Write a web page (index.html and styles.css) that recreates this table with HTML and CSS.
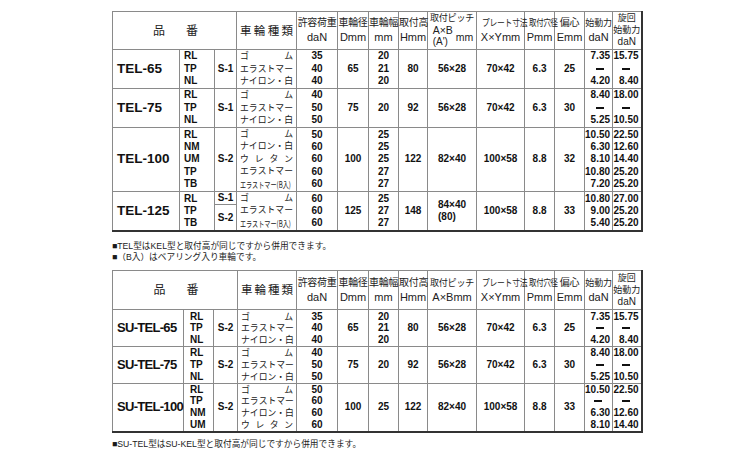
FILE: index.html
```html
<!DOCTYPE html>
<html lang="ja">
<head>
<meta charset="utf-8">
<title>TEL</title>
<link rel="stylesheet" href="styles.css">
</head>
<body>
<div class="page">

<table class="t t1">
<colgroup>
<col class="w-name"><col class="w-code"><col class="w-s"><col class="w-kind">
<col class="w-load"><col class="w-dia"><col class="w-wid"><col class="w-hgt"><col class="w-pit"><col class="w-plt"><col class="w-hole"><col class="w-ecc"><col class="w-st"><col class="w-rot">
</colgroup>
<tr class="hd">
<th colspan="3"><div class="hin"><span>品</span><span>番</span></div></th>
<th><div class="kh"><span>車</span><span>輪</span><span>種</span><span>類</span></div></th>
<th><div class="j">許容荷重</div><div class="u">daN</div></th>
<th><div class="j">車輪径</div><div class="u">Dmm</div></th>
<th><div class="j">車輪幅</div><div class="u">mm</div></th>
<th><div class="j">取付高</div><div class="u">Hmm</div></th>
<th><div class="j j9 jp">取付ピッチ</div><div class="pu"><div class="pl"><div>A×B</div><div class="pa">(A')</div></div><div class="pm">mm</div></div></th>
<th><div class="j"><span class="sq sq1">プレート寸法</span></div><div class="u">X×Ymm</div></th>
<th><div class="j"><span class="sq sq2">取付穴径</span></div><div class="u">Pmm</div></th>
<th><div class="j">偏心</div><div class="u">Emm</div></th>
<th><div class="j j9">始動力</div><div class="u">daN</div></th>
<th><div class="r3h"><div>旋回</div><div>始動力</div><div class="u">daN</div></div></th>
</tr>

<tr class="g39">
<td class="nm">TEL-65</td>
<td class="cd">RL<br>TP<br>NL</td>
<td class="s">S-1</td>
<td class="kd"><div class="k"><span>ゴ</span><span>ム</span></div><div class="k"><span>エ</span><span>ラ</span><span>ス</span><span>ト</span><span>マ</span><span>ー</span></div><div class="k"><span>ナ</span><span>イ</span><span>ロ</span><span>ン</span><span>・</span><span>白</span></div></td>
<td class="n">35<br>40<br>40</td>
<td class="n">65</td>
<td class="n">20<br>21<br>20</td>
<td class="n">80</td>
<td class="n">56×28</td>
<td class="n">70×42</td>
<td class="n">6.3</td>
<td class="n">25</td>
<td class="f"><div class="fb"><div>7.35</div><div class="d"><i></i></div><div>4.20</div></div></td>
<td class="f"><div class="fb"><div>15.75</div><div class="d"><i></i></div><div>8.40</div></div></td>
</tr>

<tr class="g39">
<td class="nm">TEL-75</td>
<td class="cd">RL<br>TP<br>NL</td>
<td class="s">S-1</td>
<td class="kd"><div class="k"><span>ゴ</span><span>ム</span></div><div class="k"><span>エ</span><span>ラ</span><span>ス</span><span>ト</span><span>マ</span><span>ー</span></div><div class="k"><span>ナ</span><span>イ</span><span>ロ</span><span>ン</span><span>・</span><span>白</span></div></td>
<td class="n">40<br>50<br>50</td>
<td class="n">75</td>
<td class="n">20</td>
<td class="n">92</td>
<td class="n">56×28</td>
<td class="n">70×42</td>
<td class="n">6.3</td>
<td class="n">30</td>
<td class="f"><div class="fb"><div>8.40</div><div class="d"><i></i></div><div>5.25</div></div></td>
<td class="f"><div class="fb"><div>18.00</div><div class="d"><i></i></div><div>10.50</div></div></td>
</tr>

<tr class="g62">
<td class="nm">TEL-100</td>
<td class="cd">RL<br>NM<br>UM<br>TP<br>TB</td>
<td class="s">S-2</td>
<td class="kd"><div class="k"><span>ゴ</span><span>ム</span></div><div class="k"><span>ナ</span><span>イ</span><span>ロ</span><span>ン</span><span>・</span><span>白</span></div><div class="k"><span>ウ</span><span>レ</span><span>タ</span><span>ン</span></div><div class="k"><span>エ</span><span>ラ</span><span>ス</span><span>ト</span><span>マ</span><span>ー</span></div><div class="kb"><span>エラストマー(B入)</span></div></td>
<td class="n">50<br>60<br>60<br>60<br>60</td>
<td class="n">100</td>
<td class="n">25<br>25<br>25<br>27<br>27</td>
<td class="n">122</td>
<td class="n">82×40</td>
<td class="n">100×58</td>
<td class="n">8.8</td>
<td class="n">32</td>
<td class="f"><div class="fb"><div>10.50</div><div>6.30</div><div>8.10</div><div>10.80</div><div>7.20</div></div></td>
<td class="f"><div class="fb"><div>22.50</div><div>12.60</div><div>14.40</div><div>25.20</div><div>25.20</div></div></td>
</tr>

<tr class="g39">
<td class="nm">TEL-125</td>
<td class="cd">RL<br>TP<br>TB</td>
<td class="s sp"><div class="s1">S-1</div><div class="s2">S-2</div></td>
<td class="kd"><div class="k"><span>ゴ</span><span>ム</span></div><div class="k"><span>エ</span><span>ラ</span><span>ス</span><span>ト</span><span>マ</span><span>ー</span></div><div class="kb"><span>エラストマー(B入)</span></div></td>
<td class="n">60<br>60<br>60</td>
<td class="n">125</td>
<td class="n">25<br>27<br>27</td>
<td class="n">148</td>
<td class="n"><div class="pb"><div>84×40</div><div>(80)</div></div></td>
<td class="n">100×58</td>
<td class="n">8.8</td>
<td class="n">33</td>
<td class="f"><div class="fb"><div>10.80</div><div>9.00</div><div>5.40</div></div></td>
<td class="f"><div class="fb"><div>27.00</div><div>25.20</div><div>25.20</div></div></td>
</tr>
</table>

<div class="notes n1">
<p>■TEL型はKEL型と取付高が同じですから併用できます。</p>
<p>■（B入）はベアリング入り車輪です。</p>
</div>

<table class="t t2">
<colgroup>
<col class="w-name2"><col class="w-code2"><col class="w-s2"><col class="w-kind2">
<col class="w-load"><col class="w-dia"><col class="w-wid"><col class="w-hgt"><col class="w-pit"><col class="w-plt"><col class="w-hole"><col class="w-ecc"><col class="w-st"><col class="w-rot">
</colgroup>
<tr class="hd hd2">
<th colspan="3"><div class="hin"><span>品</span><span>番</span></div></th>
<th><div class="kh"><span>車</span><span>輪</span><span>種</span><span>類</span></div></th>
<th><div class="j">許容荷重</div><div class="u">daN</div></th>
<th><div class="j">車輪径</div><div class="u">Dmm</div></th>
<th><div class="j">車輪幅</div><div class="u">mm</div></th>
<th><div class="j">取付高</div><div class="u">Hmm</div></th>
<th><div class="j j9">取付ピッチ</div><div class="u">A×Bmm</div></th>
<th><div class="j"><span class="sq sq1">プレート寸法</span></div><div class="u">X×Ymm</div></th>
<th><div class="j"><span class="sq sq2">取付穴径</span></div><div class="u">Pmm</div></th>
<th><div class="j">偏心</div><div class="u">Emm</div></th>
<th><div class="j j9">始動力</div><div class="u">daN</div></th>
<th><div class="r3h"><div>旋回</div><div>始動力</div><div class="u">daN</div></div></th>
</tr>

<tr class="g37">
<td class="nm nm2">SU-TEL-65</td>
<td class="cd cd2">RL<br>TP<br>NL</td>
<td class="s">S-2</td>
<td class="kd"><div class="k"><span>ゴ</span><span>ム</span></div><div class="k"><span>エ</span><span>ラ</span><span>ス</span><span>ト</span><span>マ</span><span>ー</span></div><div class="k"><span>ナ</span><span>イ</span><span>ロ</span><span>ン</span><span>・</span><span>白</span></div></td>
<td class="n">35<br>40<br>40</td>
<td class="n">65</td>
<td class="n">20<br>21<br>20</td>
<td class="n">80</td>
<td class="n">56×28</td>
<td class="n">70×42</td>
<td class="n">6.3</td>
<td class="n">25</td>
<td class="f"><div class="fb"><div>7.35</div><div class="d"><i></i></div><div>4.20</div></div></td>
<td class="f"><div class="fb"><div>15.75</div><div class="d"><i></i></div><div>8.40</div></div></td>
</tr>

<tr class="g34">
<td class="nm nm2">SU-TEL-75</td>
<td class="cd cd2">RL<br>TP<br>NL</td>
<td class="s">S-2</td>
<td class="kd"><div class="k"><span>ゴ</span><span>ム</span></div><div class="k"><span>エ</span><span>ラ</span><span>ス</span><span>ト</span><span>マ</span><span>ー</span></div><div class="k"><span>ナ</span><span>イ</span><span>ロ</span><span>ン</span><span>・</span><span>白</span></div></td>
<td class="n">40<br>50<br>50</td>
<td class="n">75</td>
<td class="n">20</td>
<td class="n">92</td>
<td class="n">56×28</td>
<td class="n">70×42</td>
<td class="n">6.3</td>
<td class="n">30</td>
<td class="f"><div class="fb"><div>8.40</div><div class="d"><i></i></div><div>5.25</div></div></td>
<td class="f"><div class="fb"><div>18.00</div><div class="d"><i></i></div><div>10.50</div></div></td>
</tr>

<tr class="g48">
<td class="nm nm2">SU-TEL-100</td>
<td class="cd cd2">RL<br>TP<br>NM<br>UM</td>
<td class="s">S-2</td>
<td class="kd"><div class="k"><span>ゴ</span><span>ム</span></div><div class="k"><span>エ</span><span>ラ</span><span>ス</span><span>ト</span><span>マ</span><span>ー</span></div><div class="k"><span>ナ</span><span>イ</span><span>ロ</span><span>ン</span><span>・</span><span>白</span></div><div class="k"><span>ウ</span><span>レ</span><span>タ</span><span>ン</span></div></td>
<td class="n">50<br>60<br>60<br>60</td>
<td class="n">100</td>
<td class="n">25</td>
<td class="n">122</td>
<td class="n">82×40</td>
<td class="n">100×58</td>
<td class="n">8.8</td>
<td class="n">33</td>
<td class="f"><div class="fb"><div>10.50</div><div class="d"><i></i></div><div>6.30</div><div>8.10</div></div></td>
<td class="f"><div class="fb"><div>22.50</div><div class="d"><i></i></div><div>12.60</div><div>14.40</div></div></td>
</tr>
</table>

<div class="notes n3">
<p>■SU-TEL型はSU-KEL型と取付高が同じですから併用できます。</p>
</div>

</div>
</body>
</html>
```

FILE: styles.css
```css
body {
  margin: 0;
  background: #fff;
  color: #111;
  font-family: "Liberation Sans", "Noto Sans CJK JP", sans-serif;
}
.page {
  padding: 11px 0 0 112px;
}
.t {
  border-collapse: collapse;
  table-layout: fixed;
  width: 530px;
  border-top: 1px solid #777;
  border-left: 1px solid #777;
  border-right: 2px solid #333;
  border-bottom: 2px solid #333;
}
.t th, .t td {
  border: 1px solid #8a8a8a;
  padding: 0;
  vertical-align: middle;
  text-align: center;
  overflow: visible;
  white-space: nowrap;
}
.w-name { width: 67px; }
.w-code { width: 35px; }
.w-s { width: 22px; }
.w-kind { width: 60px; }
.w-name2 { width: 71px; }
.w-code2 { width: 30px; }
.w-s2 { width: 24px; }
.w-kind2 { width: 59px; }
.w-load { width: 41px; }
.w-dia { width: 31px; }
.w-wid { width: 30px; }
.w-hgt { width: 29px; }
.w-pit { width: 49px; }
.w-plt { width: 48px; }
.w-hole { width: 30px; }
.w-ecc { width: 30px; }
.w-st { width: 28px; }
.w-rot { width: 29px; }

/* header */
.hd th {
  height: 37px;
  font-weight: normal;
  color: #222;
  font-size: 10px;
  line-height: 14px;
}
.hd2 th { height: 38px; }
.hin {
  display: flex;
  justify-content: center;
  gap: 21px;
  font-size: 12px;
  padding-left: 2px;
}
.kh {
  display: flex;
  justify-content: space-between;
  padding: 0 3px;
  font-size: 11.5px;
}
.j {
  font-size: 10px;
  line-height: 14px;
  letter-spacing: -0.3px;
}
.j9 { font-size: 9px; letter-spacing: -0.2px; }
.jp { line-height: 11px; }
.sq {
  display: inline-block;
  font-size: 9.5px;
}
.sq1 { transform: scaleX(0.82); }
.sq2 { transform: scaleX(0.78); }
.u {
  font-family: "Liberation Sans", sans-serif;
  font-size: 11px;
  line-height: 15px;
}
.pu {
  display: flex;
  justify-content: center;
  align-items: center;
  font-size: 10.5px;
  line-height: 12px;
  font-family: "Liberation Sans", sans-serif;
  gap: 3px;
  padding-left: 2px;
}
.pl { text-align: left; }
.pa { font-size: 10px; }
.pm { font-size: 10.5px; padding-top: 2px; }
.r3h {
  font-size: 9px;
  line-height: 11.5px;
}
.r3h .u { font-size: 10px; line-height: 11.5px; }

/* body rows */
.g39 td { height: 38px; }
.g62 td { height: 61px; }
.g37 td { height: 36px; }
.g34 td { height: 33px; }
.g48 td { height: 47px; }

.t td {
  font-weight: bold;
  font-size: 10px;
  line-height: 12.4px;
}
.t2 td { line-height: 11.8px; }
.t td.nm {
  text-align: left;
  padding-left: 4px;
  font-size: 13.5px;
}
.t td.nm2 {
  font-size: 13px;
  letter-spacing: -0.7px;
}
.t td.cd {
  text-align: left;
  padding-left: 4px;
  font-size: 10px;
}
.t td.cd2 { padding-left: 6px; }
.t td.s { font-size: 10px; }
.t td.sp { vertical-align: top; }
.s1 {
  height: 12px;
  line-height: 12px;
  border-bottom: 1px solid #8a8a8a;
}
.s2 {
  height: 25px;
  line-height: 25px;
}
.t td.kd {
  font-weight: normal;
  font-family: "Noto Sans CJK JP", sans-serif;
  font-size: 8.8px;
  padding: 0 3px;
  color: #1a1a1a;
}
.k {
  display: flex;
  justify-content: space-between;
}
.k span { flex: none; }
.kb {
  text-align: left;
  white-space: nowrap;
}
.kb span {
  display: inline-block;
  font-size: 8.5px;
  transform: scaleX(0.72);
  transform-origin: left center;
}
.t td.f {
  text-align: right;
  padding-right: 2px;
}
.fb {
  display: inline-block;
  text-align: right;
}
.fb .d {
  text-align: center;
  height: 12.4px;
  display: flex;
  justify-content: center;
  align-items: center;
}
.t2 .fb .d { height: 11.8px; }
.fb .d i {
  display: block;
  width: 8px;
  height: 2px;
  background: #111;
}
.pb {
  display: inline-block;
  text-align: left;
}

/* notes */
.notes {
  font-family: "Liberation Sans", "Noto Sans CJK JP", sans-serif;
  font-size: 8.7px;
  line-height: 11px;
  color: #1a1a1a;
}
.notes p { margin: 0; }
.n1 { margin: 9px 0 7px; }
.n3 { margin-top: 6px; }
```
